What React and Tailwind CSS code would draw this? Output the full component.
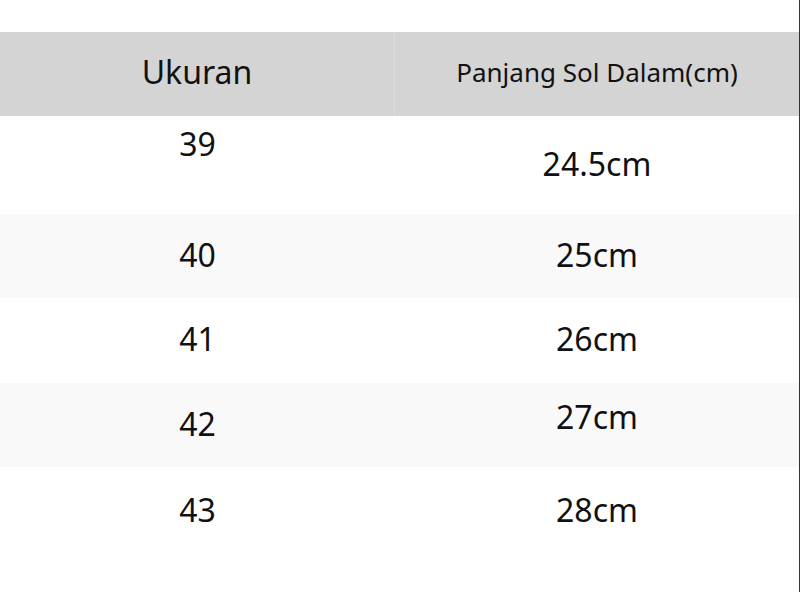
const rows = [
  { size: "39", len: "24.5cm", h: "h-[98px]", bg: "bg-white", a: "pt-[6px]", b: "pt-[26px]" },
  { size: "40", len: "25cm", h: "h-[84px]", bg: "bg-[#f9f9f9]", a: "pt-[19px]", b: "pt-[19px]" },
  { size: "41", len: "26cm", h: "h-[85px]", bg: "bg-white", a: "pt-[19px]", b: "pt-[19px]" },
  { size: "42", len: "27cm", h: "h-[84px]", bg: "bg-[#f9f9f9]", a: "pt-[19px]", b: "pt-[12px]" },
  { size: "43", len: "28cm", h: "h-[85px]", bg: "bg-white", a: "pt-[21px]", b: "pt-[21px]" },
];

const App = () => {
  return (
    <div className="w-[800px] h-[592px] bg-white flex font-['Noto_Sans',sans-serif] text-[#111]">
      <div className="flex-1 pt-[32px]">
        <div className="flex h-[84px] bg-[#d4d4d4]">
          <div className="w-[395px] flex items-center justify-center text-[32px] pb-[4px] border-r border-[#dcdcdc]">
            Ukuran
          </div>
          <div className="flex-1 flex items-center justify-center text-[26px] pb-[4px]">
            Panjang Sol Dalam(cm)
          </div>
        </div>
        {rows.map((r) => (
          <div key={r.size} className={`flex ${r.h} ${r.bg}`}>
            <div className={`w-[395px] text-center text-[32px] leading-[44px] ${r.a}`}>
              {r.size}
            </div>
            <div className={`flex-1 text-center text-[32px] leading-[44px] ${r.b}`}>
              {r.len}
            </div>
          </div>
        ))}
      </div>
      <div className="w-[1px] bg-[#333]" />
    </div>
  );
};

export default App;
